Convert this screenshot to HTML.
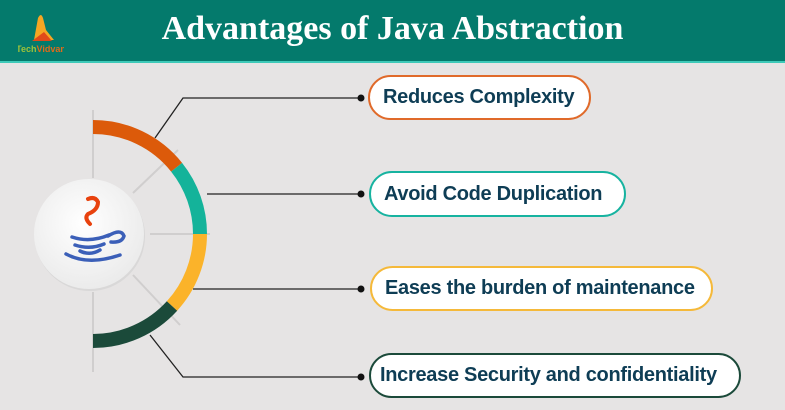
<!DOCTYPE html>
<html><head><style>
html,body{margin:0;padding:0}
body{width:785px;height:410px;background:#e6e4e4;position:relative;overflow:hidden;font-family:"Liberation Sans",sans-serif}
.hdr{position:absolute;left:0;top:0;width:785px;height:61px;background:#047a6c;border-bottom:2px solid #3ec9b8}
.title{position:absolute;left:0;width:785px;top:10px;text-align:center;color:#fff;font-family:"Liberation Serif",serif;font-weight:bold;font-size:34px}
.pill{position:absolute;background:#fff;border-radius:23px;box-sizing:border-box;border:2px solid;color:#0e3d55;font-weight:bold;font-size:20px;display:flex;align-items:center;padding-left:13px;letter-spacing:-0.3px}
</style></head><body>
<div class="hdr"><div class="title">Advantages of Java Abstraction</div>
<svg style="position:absolute;left:18px;top:8px" width="46" height="46" viewBox="0 0 46 46">
<path d="M16 32 L20 10 Q23 4 25 10 L28 22 L36 32 Z" fill="#f5a623"/><path d="M14 33 L26 24 L34 33 Z" fill="#e04a1a"/>
<text x="23" y="44" font-size="9" font-weight="bold" text-anchor="middle" fill="#9ec23a" font-family="Liberation Sans">Tech<tspan fill="#e06a1a">Vidvan</tspan></text></svg>
</div>
<svg style="position:absolute;left:0;top:0" width="785" height="410">
<g stroke="#d0cece" stroke-width="2"><line x1="93" y1="110" x2="93" y2="178"/><line x1="93" y1="292" x2="93" y2="372"/>
<line x1="133" y1="193" x2="178" y2="150"/><line x1="150" y1="234" x2="210" y2="234"/><line x1="133" y1="275" x2="180" y2="325"/></g>
<g fill="none" stroke-width="14">
<path d="M93 127 A107 107 0 0 1 176.6 167.2" stroke="#dc5a0a"/>
<path d="M176.6 167.2 A107 107 0 0 1 200 234" stroke="#14b39a"/>
<path d="M200 234 A107 107 0 0 1 172 306" stroke="#fbb32a"/>
<path d="M172 306 A107 107 0 0 1 93 341" stroke="#1b4a3a"/></g>
<g fill="none" stroke="#222" stroke-width="1.3">
<polyline points="155,138 183,98 361,98"/><line x1="207" y1="194" x2="361" y2="194"/><line x1="193" y1="289" x2="361" y2="289"/><polyline points="150,335 183,377 361,377"/></g>
<g fill="#111"><circle cx="361" cy="98" r="3.5"/><circle cx="361" cy="194" r="3.5"/><circle cx="361" cy="289" r="3.5"/><circle cx="361" cy="377" r="3.5"/></g>
<defs><radialGradient id="g" cx="45%" cy="40%" r="60%"><stop offset="0" stop-color="#fff"/><stop offset="1" stop-color="#ebebeb"/></radialGradient></defs>
<circle cx="90" cy="236" r="55" fill="#ccc" opacity=".5"/>
<circle cx="89" cy="234" r="55" fill="url(#g)"/>
<path d="M88 199 Q95 196 98 202 Q98 210 88 214 Q84 218 90 224" fill="none" stroke="#e8420e" stroke-width="4" stroke-linecap="round"/>
<g fill="none" stroke="#3b5fb8" stroke-width="3.5" stroke-linecap="round">
<path d="M72 237 Q90 243 109 235"/><path d="M75 245 Q90 250 104 244"/><path d="M80 251 Q90 256 100 250"/><path d="M66 254 Q88 266 120 255"/>
<path d="M108 236 Q121 228 124 236 Q122 243 111 242"/></g>
</svg>
<div class="pill" style="left:368px;top:75px;width:223px;height:45px;border-color:#e06a2a">Reduces Complexity</div>
<div class="pill" style="left:369px;top:171px;width:257px;height:46px;border-color:#17b3a0">Avoid Code Duplication</div>
<div class="pill" style="left:370px;top:266px;width:343px;height:45px;border-color:#f5b93a">Eases the burden of maintenance</div>
<div class="pill" style="left:369px;top:353px;width:372px;height:45px;border-color:#1b4a3a;padding-left:9px">Increase Security and confidentiality</div>
</body></html>
